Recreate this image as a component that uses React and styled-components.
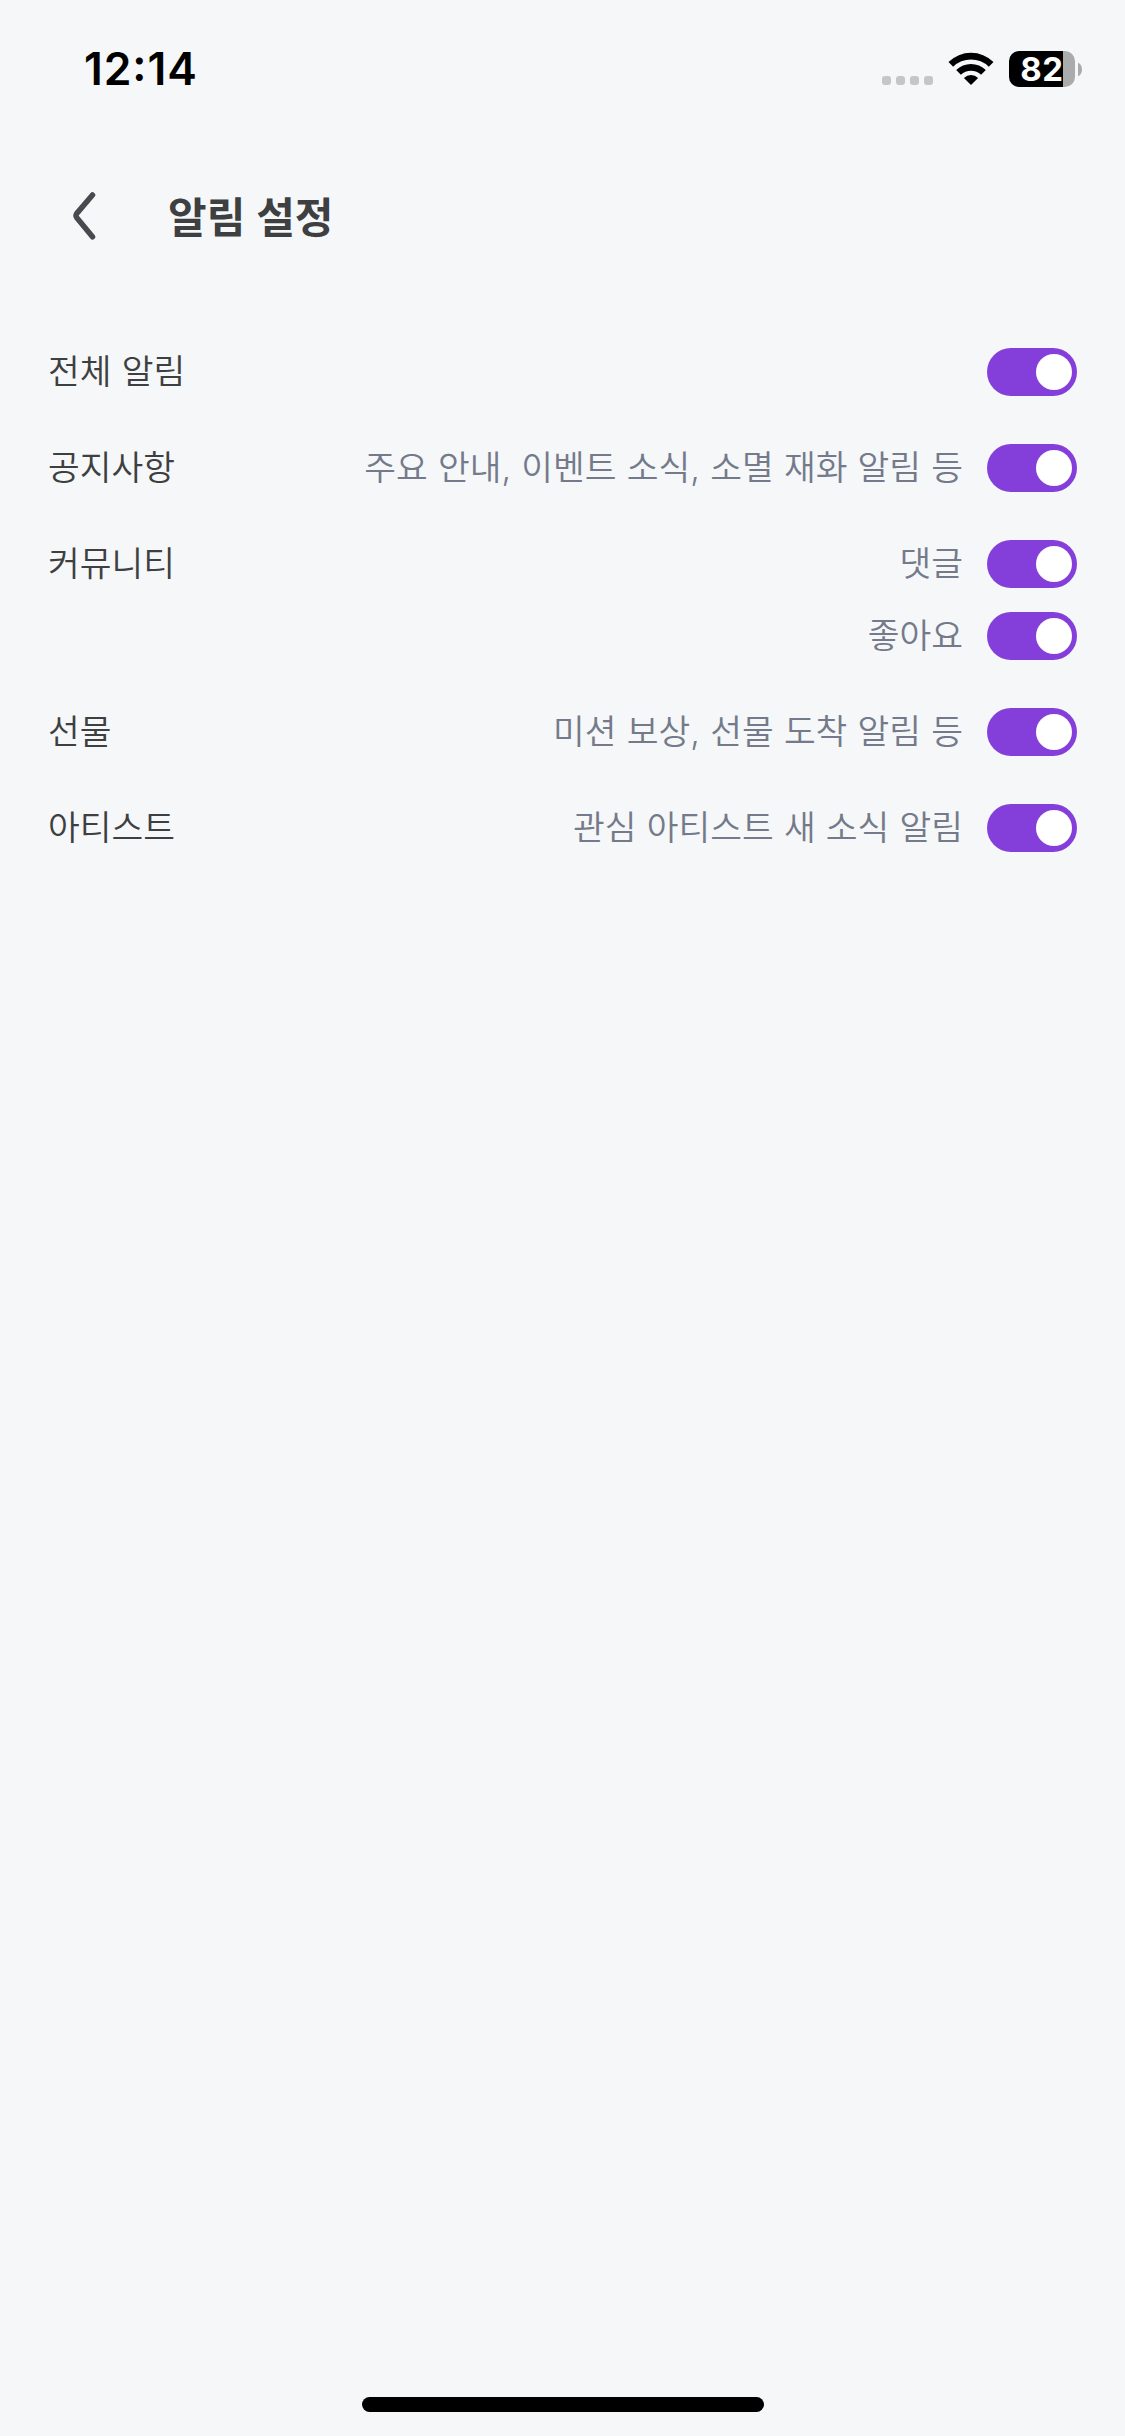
import React, { useState } from "react";
import styled, { createGlobalStyle } from "styled-components";

const GlobalStyle = createGlobalStyle`
  *, *::before, *::after { box-sizing: border-box; }
  body { margin: 0; background: #f5f7f9; }
`;

const Screen = styled.div`
  display: flex;
  flex-direction: column;
  width: 1125px;
  height: 2436px;
  background: #f5f7f9;
  color: #3e3f41;
  font-family: "Noto Sans CJK KR", "Noto Sans", sans-serif;
`;

const StatusBar = styled.div`
  display: flex;
  align-items: center;
  justify-content: space-between;
  height: 138px;
  padding: 0 43px 0 84px;
  color: #000;
  font-family: Inter, sans-serif;
`;

const Time = styled.span`
  font-size: 44.5px;
  font-weight: 600;
  line-height: 54px;
  letter-spacing: 0.9px;
`;

const Colon = styled.span`
  line-height: 0;
  vertical-align: 4px;
`;

const StatusIcons = styled.div`
  display: flex;
  align-items: center;
`;

const SignalDots = styled.div`
  display: flex;
  gap: 5px;
  margin: 23px 15px 0 0;
`;

const Dot = styled.span`
  width: 9px;
  height: 9px;
  border-radius: 3px;
  background: #c5c6c8;
`;

const Wifi = styled.svg`
  display: block;
  width: 46px;
  height: 34px;
  margin-right: 15px;
`;

const Battery = styled.div`
  display: flex;
  align-items: center;
  gap: 3px;
`;

const BatteryBody = styled.div`
  display: flex;
  align-items: center;
  justify-content: center;
  width: 66px;
  height: 36px;
  border-radius: 10px;
  background: linear-gradient(to right, #000 ${(p) => p.$level}%, #aaabad ${(p) => p.$level}%);
  color: #fff;
  font-size: 33px;
  font-weight: 700;
  line-height: 36px;
  letter-spacing: 0.6px;
`;

const BatteryTip = styled.span`
  width: 4px;
  height: 13px;
  border-radius: 0 100% 100% 0 / 0 50% 50% 0;
  background: #aaabad;
`;

const Header = styled.header`
  display: flex;
  align-items: center;
  height: 156px;
  padding-left: 72px;
`;

const BackButton = styled.button`
  width: 24px;
  height: 48px;
  margin-right: 72px;
  padding: 0;
  border: 0;
  background: none;
`;

const Chevron = styled.svg`
  display: block;
  width: 24px;
  height: 48px;
`;

const Title = styled.h1`
  margin: 0 0 2px;
  font-size: 42px;
  font-weight: 700;
  line-height: 60px;
  word-spacing: 1.4px;
`;

const Settings = styled.main`
  display: flex;
  flex: 1;
  flex-direction: column;
  gap: 48px;
  padding: 54px 48px 0;
  font-family: Inter, "Noto Sans CJK KR", sans-serif;
`;

const Group = styled.section`
  display: flex;
  align-items: flex-start;
  justify-content: space-between;
`;

const Label = styled.h2`
  margin: 0;
  font-size: 34.5px;
  font-weight: 350;
  line-height: 47px;
  word-spacing: 0.5px;
`;

const Options = styled.div`
  display: flex;
  flex-direction: column;
  gap: 24px;
`;

const Option = styled.label`
  display: flex;
  align-items: flex-start;
  justify-content: flex-end;
  gap: 24px;
  height: 48px;
`;

const Description = styled.span`
  color: #747a8a;
  font-size: 34.5px;
  font-weight: 350;
  line-height: 47px;
  word-spacing: 0.5px;
  white-space: nowrap;
`;

const Track = styled.button`
  display: flex;
  align-items: center;
  justify-content: ${(p) => (p.$on ? "flex-end" : "flex-start")};
  width: 90px;
  height: 48px;
  padding: 0 5px;
  border: 0;
  border-radius: 24px;
  background: ${(p) => (p.$on ? "#843fdb" : "#c4c7d0")};
`;

const Knob = styled.span`
  width: 36px;
  height: 36px;
  border-radius: 50%;
  background: #fff;
`;

const HomeArea = styled.footer`
  display: flex;
  justify-content: center;
  padding-bottom: 24px;
`;

const HomeIndicator = styled.div`
  width: 402px;
  height: 15px;
  border-radius: 8px;
  background: #000;
`;

const groups = [
  { label: "전체 알림", options: [""] },
  { label: "공지사항", options: ["주요 안내, 이벤트 소식, 소멸 재화 알림 등"] },
  { label: "커뮤니티", options: ["댓글", "좋아요"] },
  { label: "선물", options: ["미션 보상, 선물 도착 알림 등"] },
  { label: "아티스트", options: ["관심 아티스트 새 소식 알림"] },
];

function Toggle() {
  const [on, setOn] = useState(true);
  return (
    <Track type="button" role="switch" aria-checked={on} $on={on} onClick={() => setOn(!on)}>
      <Knob />
    </Track>
  );
}

export default function App() {
  return (
    <Screen>
      <GlobalStyle />
      <StatusBar>
        <Time>
          12<Colon>:</Colon>14
        </Time>
        <StatusIcons>
          <SignalDots>
            <Dot />
            <Dot />
            <Dot />
            <Dot />
          </SignalDots>
          <Wifi viewBox="0 0 46 34">
            <path d="M0.5 10 A32 32 0 0 1 45.5 10 L40.8 14.7 A25.4 25.4 0 0 0 5.2 14.7 Z" />
            <path d="M8.2 18 A21 21 0 0 1 37.8 18 L33.1 22.8 A14.4 14.4 0 0 0 12.9 22.8 Z" />
            <path d="M15.9 26 A10.2 10.2 0 0 1 30.1 26 L23 33 Z" />
          </Wifi>
          <Battery>
            <BatteryBody $level={82}>82</BatteryBody>
            <BatteryTip />
          </Battery>
        </StatusIcons>
      </StatusBar>
      <Header>
        <BackButton type="button" aria-label="뒤로">
          <Chevron viewBox="0 0 24 48" fill="none" stroke="#49494f" strokeWidth="5.5" strokeLinecap="round" strokeLinejoin="round">
            <path d="M20.5 3 L4.6 21.6 Q3.4 23.5 4.6 25.4 L20.5 44.8" />
          </Chevron>
        </BackButton>
        <Title>알림 설정</Title>
      </Header>
      <Settings>
        {groups.map((group) => (
          <Group key={group.label}>
            <Label>{group.label}</Label>
            <Options>
              {group.options.map((text) => (
                <Option key={text}>
                  {text && <Description>{text}</Description>}
                  <Toggle />
                </Option>
              ))}
            </Options>
          </Group>
        ))}
      </Settings>
      <HomeArea>
        <HomeIndicator />
      </HomeArea>
    </Screen>
  );
}
